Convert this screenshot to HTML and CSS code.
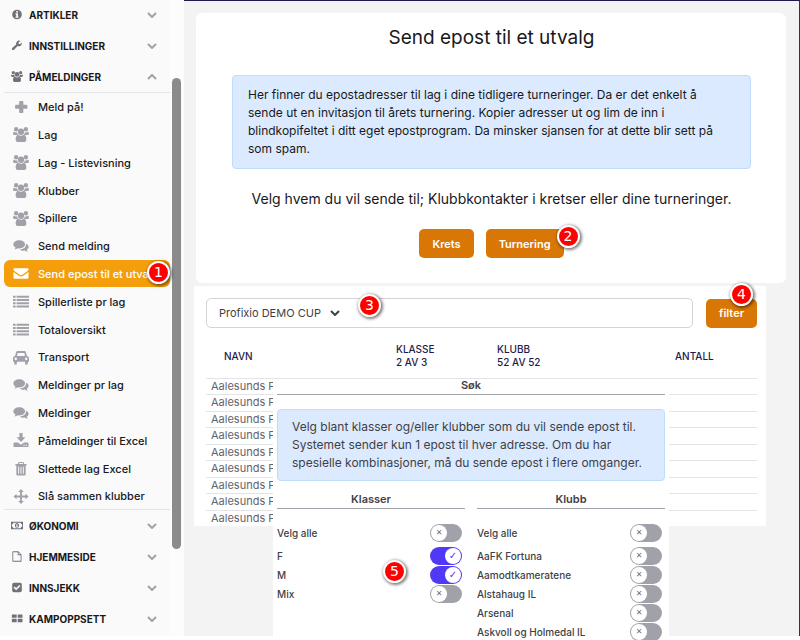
FILE: index.html
```html
<!DOCTYPE html>
<html lang="no">

	<head>
		<meta charset="UTF-8">
		<title>Send epost til et utvalg</title>
		<link rel="stylesheet" href="styles.css">
	</head>

	<body>
		<svg class="sprite" aria-hidden="true">
			<symbol id="info" viewBox="0 0 16 16"><path fill-rule="evenodd" d="M8 1a7 7 0 1 1 0 14A7 7 0 0 1 8 1zM6.800 3v2.200h2.600V3zM5.800 6.300v1.600h1v3.300h-1v1.700h4.600v-1.700h-1V6.300z"/></symbol>
			<symbol id="wrench" viewBox="0 0 16 16"><path d="M15 4.200a4.300 4.300 0 0 1-6 4.600l-5.400 5.500a1.800 1.800 0 0 1-2.500-2.600l5.700-5.300A4.400 4.400 0 0 1 12.400 1l.6.300-2.600 2v2l1.700 1L14.700 4z"/></symbol>
			<symbol id="users" viewBox="0 0 18 16" preserveAspectRatio="none"><circle cx="3.500" cy="2.500" r="2.400"/><circle cx="14.500" cy="2.500" r="2.400"/><circle cx="9" cy="5" r="3.500"/><path d="M1.500 5.300c1 .6 2.200.7 3.300.2 0 1.200.5 2.400 1.100 3.100H2C.6 8.600 0 8 .1 7 .3 5 .9 4.500 1.500 5.300zM16.500 5.300c-1 .6-2.200.7-3.300.2 0 1.200-.5 2.400-1.100 3.100H16c1.400 0 2-.6 1.900-1.600-.2-2-.8-2.500-1.400-1.700zM5.800 8.300c2 1.400 4.400 1.400 6.400 0 1.900.1 2.800 2.200 2.800 4.900 0 1.800-.9 2.700-2.300 2.700H5.300C3.900 15.900 3 15 3 13.200c0-2.700.9-4.800 2.800-4.900z"/></symbol>
			<symbol id="plus" viewBox="0 0 16 16"><path d="M7 2h2.500q1 0 1 1v3.200h3.300q1 0 1 1v2.300q0 1-1 1h-3.300v3.300q0 1-1 1H7q-1 0-1-1v-3.300H2.700q-1 0-1-1V7.200q0-1 1-1H6V3q0-1 1-1z"/></symbol>
			<symbol id="comments" viewBox="0 0 18 16"><path d="M7 2c3.700 0 6.600 2 6.600 4.600s-3 4.700-6.600 4.700c-.6 0-1.200 0-1.700-.2-1 .8-2.300 1.300-3.700 1.400.6-.6 1.100-1.300 1.300-2.200C1.300 9.500.4 8.100.4 6.600.4 4 3.300 2 7 2z"/><path d="M14.700 6c1.800.7 2.900 2 2.900 3.500 0 1.400-.9 2.600-2.200 3.400.2.800.7 1.500 1.200 2-1.400 0-2.600-.5-3.500-1.200-2 .3-4.200-.2-5.500-1.300 4-.1 7.300-2.300 7.100-6.400z"/></symbol>
			<symbol id="mail" viewBox="0 0 18 16"><path d="M2 2h14q1.500 0 1.500 1.300c0 1-.7 1.700-1.500 2.300l-5.500 3.800q-1.500 1-3 0L2 5.600C1.200 5 .5 4.300.5 3.300Q.5 2 2 2z"/><path d="M.5 6.300l6 4.200q2.500 1.500 5 0l6-4.200v6.200q0 1.500-1.500 1.500H2Q.5 14 .5 12.500z"/></symbol>
			<symbol id="list" viewBox="0 0 18 16"><path d="M0 1.500h3v2.200H0zM4 1.500h14v2.200H4zM0 5.200h3v2.200H0zM4 5.200h14v2.200H4zM0 8.900h3v2.200H0zM4 8.900h14v2.200H4zM0 12.600h3v2.200H0zM4 12.600h14v2.200H4z"/></symbol>
			<symbol id="car" viewBox="0 0 20 16" preserveAspectRatio="none"><path fill-rule="evenodd" d="M6 1h8c1.300 0 2 .7 2.400 1.900L17.400 6.500c1.600.2 2.600 1.300 2.600 2.800v3.200h-1.500V14a1.700 1.700 0 0 1-3.400 0v-1.500H4.900V14a1.700 1.700 0 0 1-3.400 0v-1.500H0V9.300c0-1.500 1-2.600 2.600-2.800l1-3.600C4 1.700 4.700 1 6 1zM5 6.500h10l-.8-3.200H5.800zM3.500 7.900a1.500 1.500 0 1 0 0 3 1.500 1.500 0 0 0 0-3zM16.500 7.900a1.500 1.500 0 1 0 0 3 1.500 1.500 0 0 0 0-3z"/></symbol>
			<symbol id="download" viewBox="0 0 16 16"><path d="M6.300 0h3.400v4.500h3L8 9.500l-4.700-5h3z"/><path fill-rule="evenodd" d="M1 10h3.800L8 12.600l3.200-2.600H15q1 0 1 1v3q0 1-1 1H1q-1 0-1-1v-3q0-1 1-1zM10.500 12.500v1H12v-1zM13 12.500v1h1.500v-1z"/></symbol>
			<symbol id="trash" viewBox="0 0 16 16"><path fill-rule="evenodd" d="M5.500 1h5l1 2.200H14v1.500h-1V14q0 1.500-1.500 1.500h-7Q3 15.500 3 14V4.700H2V3.200h2.500zM6.300 2.200l-.5 1h4.400l-.5-1zM5 6v7.500h1V6zM7.500 6v7.500h1V6zM10 6v7.500h1V6z"/></symbol>
			<symbol id="move" viewBox="0 0 16 16"><path d="M8 0l3 3.200H9v3.800h3.800V5L16 8l-3.200 3V9H9v3.800h2L8 16l-3-3.200h2V9H3.200v2L0 8l3.200-3v2H7V3.200H5z"/></symbol>
			<symbol id="money" viewBox="0 0 18 16" preserveAspectRatio="none"><path fill-rule="evenodd" d="M0 2.500h18v11H0zM3.500 4c0 1.300-.9 2.200-2.200 2.200v3.600c1.300 0 2.200.9 2.200 2.200h11c0-1.300.9-2.200 2.200-2.200V6.200c-1.300 0-2.200-.9-2.200-2.200z"/><path fill-rule="evenodd" d="M9 4.500c1.900 0 3 1.500 3 3.500s-1.100 3.500-3 3.500S6 10 6 8s1.100-3.500 3-3.500zM8.500 6l-1 .8v.8h.8v2h-.8v.8h3v-.8h-.8V6z"/></symbol>
			<symbol id="file" viewBox="0 0 16 16"><path fill-rule="evenodd" d="M2 .5h8L14.500 5v10.500H2q-.7 0-.7-.7V1.200Q1.300.5 2 .5zM2.500 1.700v12.600h10.800V6H9V1.700zM10.200 2v2.800H13z"/></symbol>
			<symbol id="check" viewBox="0 0 16 16"><path fill-rule="evenodd" d="M3.500 1h9Q15 1 15 3.500v9q0 2.500-2.500 2.500h-9Q1 15 1 12.500v-9Q1 1 3.500 1zM6.800 12l6.200-6.100-1.600-1.600L6.800 8.900 4.600 6.700 3 8.300z"/></symbol>
			<symbol id="blocks" viewBox="0 0 16 16"><path d="M1 2h6q.5 0 .5.500v4q0 .5-.5.500H1q-.5 0-.5-.5v-4Q.5 2 1 2zM9.500 2h6q.5 0 .5.500v4q0 .5-.5.500h-6Q9 7 9 6.500v-4q0-.5.500-.5zM1 8.500h6q.5 0 .5.500v4q0 .5-.5.500H1q-.5 0-.5-.5V9q0-.5.500-.5zM9.500 8.500h6q.5 0 .5.500v4q0 .5-.5.500h-6Q9 13.500 9 13V9q0-.5.500-.5z"/></symbol>
			<symbol id="down" viewBox="0 0 10 6"><path d="M1 1l4 4 4-4" fill="none" stroke="currentColor" stroke-width="2"/></symbol>
			<symbol id="up" viewBox="0 0 10 6"><path d="M1 5l4-4 4 4" fill="none" stroke="currentColor" stroke-width="2"/></symbol>
		</svg>

		<nav class="sidebar">
			<div class="menu">
				<button class="group" type="button"><svg class="g-icon"><use href="#info"/></svg>Artikler<svg class="arrow"><use href="#down"/></svg></button>
				<button class="group" type="button"><svg class="g-icon"><use href="#wrench"/></svg>Innstillinger<svg class="arrow"><use href="#down"/></svg></button>
				<button class="group" type="button"><svg class="g-icon"><use href="#users"/></svg>Påmeldinger<svg class="arrow"><use href="#up"/></svg></button>
				<ul class="sub">
					<li><a href="#"><svg class="icon"><use href="#plus"/></svg>Meld på!</a></li>
					<li><a href="#"><svg class="icon"><use href="#users"/></svg>Lag</a></li>
					<li><a href="#"><svg class="icon"><use href="#users"/></svg>Lag - Listevisning</a></li>
					<li><a href="#"><svg class="icon"><use href="#users"/></svg>Klubber</a></li>
					<li><a href="#"><svg class="icon"><use href="#users"/></svg>Spillere</a></li>
					<li><a href="#"><svg class="icon"><use href="#comments"/></svg>Send melding</a></li>
					<li><a class="active" href="#"><svg class="icon"><use href="#mail"/></svg><span class="label">Send epost til et utvalg</span><span class="badge badge-menu">1</span></a></li>
					<li><a href="#"><svg class="icon"><use href="#list"/></svg>Spillerliste pr lag</a></li>
					<li><a href="#"><svg class="icon"><use href="#list"/></svg>Totaloversikt</a></li>
					<li><a href="#"><svg class="icon"><use href="#car"/></svg>Transport</a></li>
					<li><a href="#"><svg class="icon"><use href="#comments"/></svg>Meldinger pr lag</a></li>
					<li><a href="#"><svg class="icon"><use href="#comments"/></svg>Meldinger</a></li>
					<li><a href="#"><svg class="icon"><use href="#download"/></svg>Påmeldinger til Excel</a></li>
					<li><a href="#"><svg class="icon"><use href="#trash"/></svg>Slettede lag Excel</a></li>
					<li><a href="#"><svg class="icon"><use href="#move"/></svg>Slå sammen klubber</a></li>
				</ul>
				<button class="group" type="button"><svg class="g-icon"><use href="#money"/></svg>Økonomi<svg class="arrow"><use href="#down"/></svg></button>
				<button class="group" type="button"><svg class="g-icon"><use href="#file"/></svg>Hjemmeside<svg class="arrow"><use href="#down"/></svg></button>
				<button class="group" type="button"><svg class="g-icon"><use href="#check"/></svg>Innsjekk<svg class="arrow"><use href="#down"/></svg></button>
				<button class="group" type="button"><svg class="g-icon"><use href="#blocks"/></svg>Kampoppsett<svg class="arrow"><use href="#down"/></svg></button>
			</div>
			<div class="track"><div class="thumb"></div></div>
		</nav>

		<main class="main">
			<section class="card">
				<h1>Send epost til et utvalg</h1>
				<p class="info">Her finner du epostadresser til lag i dine tidligere turneringer. Da er det enkelt å sende ut en invitasjon til årets turnering. Kopier adresser ut og lim de inn i blindkopifeltet i ditt eget epostprogram. Da minsker sjansen for at dette blir sett på som spam.</p>
				<p class="lead">Velg hvem du vil sende til; Klubbkontakter i kretser eller dine turneringer.</p>
				<div class="buttons">
					<button class="btn" type="button">Krets</button>
					<button class="btn" type="button">Turnering<span class="badge badge-turnering">2</span></button>
				</div>
			</section>

			<section class="panel">
				<div class="bar">
					<div class="picker">
						<select aria-label="Turnering">
							<option>Profixio DEMO CUP</option>
						</select>
						<svg class="arrow"><use href="#down"/></svg>
						<span class="badge badge-picker">3</span>
					</div>
					<button class="btn" type="button">filter<span class="badge badge-filter">4</span></button>
				</div>
				<table class="teams">
					<thead>
						<tr>
							<th class="c-name">Navn</th>
							<th class="c-class">Klasse<br>2 av 3</th>
							<th class="c-club">Klubb<br>52 av 52</th>
							<th class="c-count">Antall</th>
						</tr>
					</thead>
					<tbody>
						<tr><td colspan="4">Aalesunds F</td></tr>
						<tr><td colspan="4">Aalesunds F</td></tr>
						<tr><td colspan="4">Aalesunds F</td></tr>
						<tr><td colspan="4">Aalesunds F</td></tr>
						<tr><td colspan="4">Aalesunds F</td></tr>
						<tr><td colspan="4">Aalesunds F</td></tr>
						<tr><td colspan="4">Aalesunds F</td></tr>
						<tr><td colspan="4">Aalesunds F</td></tr>
						<tr><td colspan="4">Aalesunds F</td></tr>
					</tbody>
				</table>

				<div class="dialog" role="dialog" aria-labelledby="sok">
					<h2 id="sok">Søk</h2>
					<p class="info">Velg blant klasser og/eller klubber som du vil sende epost til. Systemet sender kun 1 epost til hver adresse. Om du har spesielle kombinasjoner, må du sende epost i flere omganger.</p>
					<div class="columns">
						<div class="column">
							<h2>Klasser</h2>
							<label class="all">Velg alle<input type="checkbox"></label>
							<label>F<input type="checkbox" checked></label>
							<label>M<input type="checkbox" checked></label>
							<label>Mix<input type="checkbox"></label>
						</div>
						<div class="column">
							<h2>Klubb</h2>
							<label class="all">Velg alle<input type="checkbox"></label>
							<label>AaFK Fortuna<input type="checkbox"></label>
							<label>Aamodtkameratene<input type="checkbox"></label>
							<label>Alstahaug IL<input type="checkbox"></label>
							<label>Arsenal<input type="checkbox"></label>
							<label>Askvoll og Holmedal IL<input type="checkbox"></label>
						</div>
					</div>
					<span class="badge badge-dialog">5</span>
				</div>
			</section>
		</main>
	</body>

</html>
```
FILE: styles.css
```css
* {
	box-sizing: border-box;
}

body {
	margin: 0;
	height: 100vh;
	padding-bottom: 4px;
	display: flex;
	overflow: hidden;
	background-color: #fff;
	font-family: Inter, "Liberation Sans", sans-serif;
	color: #18181b;
}

h1, h2, p, ul {
	margin: 0;
	padding: 0;
}

button, select {
	font-family: inherit;
	border: none;
	background: none;
	padding: 0;
}

svg {
	fill: currentColor;
	flex: none;
}

.sprite {
	display: none;
}

/* sidebar */
.sidebar {
	flex: 0 0 184px;
	min-width: 0;
	display: flex;
	background-color: #fcfcfc;
}

.menu {
	flex: 1;
	min-width: 0;
	margin-top: -1px;
	padding-left: 4px;
	background-color: #fafafa;
}

.group {
	display: flex;
	align-items: center;
	width: 100%;
	height: 31px;
	padding: 0 13px 0 7px;
	font-size: 10px;
	font-weight: 700;
	text-transform: uppercase;
	color: #18181b;
}

.g-icon {
	width: 12px;
	height: 11px;
	margin-right: 6px;
	color: #71717a;
}

.arrow {
	width: 10px;
	height: 6px;
}

.group .arrow {
	margin-left: auto;
	color: #a1a1aa;
}

.sub {
	list-style: none;
	display: grid;
	grid-template-columns: minmax(0, 1fr);
	gap: 1px;
	border-top: 1px solid #e4e4e7;
	border-bottom: 1px solid #e4e4e7;
}

.sub a {
	position: relative;
	display: flex;
	align-items: center;
	gap: 9px;
	height: 27px;
	padding-left: 9px;
	border-radius: 6px;
	font-size: 11px;
	font-weight: 500;
	white-space: nowrap;
	text-decoration: none;
	color: #18181b;
}

.sub li:nth-child(5n) a {
	height: 26px;
}

.sub .active {
	padding-right: 22px;
	background-color: #f59e0b;
	color: #fff;
}

.label {
	min-width: 0;
	overflow: hidden;
}

.icon {
	width: 16px;
	height: 15px;
	color: #a1a1aa;
}

.active .icon {
	color: #fff;
}

.track {
	flex: none;
	width: 14px;
	padding: 78px 3px 0 2px;
}

.thumb {
	height: 471px;
	border-radius: 5px;
	background-color: #8b8b8b;
}

/* content */
.main {
	flex: 1;
	min-width: 0;
	padding: 12px 13px 0 10px;
	border-top: 1px solid #1e1b4b;
	border-right: 1px solid #1e3a5f;
	background-color: #f3f3f3;
}

.card {
	margin: 0 0 3px 2px;
	padding: 12px 35px 25px 36px;
	border-radius: 6px;
	background-color: #fff;
}

h1 {
	font-size: 19px;
	line-height: 26px;
	font-weight: 400;
	text-align: center;
}

.info {
	padding: 10px 28px 10px 15px;
	border: 1px solid #bfdbfe;
	border-radius: 4px;
	background-color: #dbeafe;
	font-size: 12px;
	line-height: 18px;
}

.card .info {
	margin: 24px 0 20px;
}

.lead {
	font-size: 14px;
	line-height: 20px;
	text-align: center;
}

.buttons {
	display: flex;
	justify-content: center;
	gap: 12px;
	margin-top: 20px;
}

.btn {
	position: relative;
	height: 29px;
	padding: 0 13px;
	border-radius: 5px;
	background-color: #d97706;
	color: #fff;
	font-size: 11px;
	font-weight: 600;
}

.panel {
	position: relative;
	margin-right: 20px;
	padding: 12px 9px 0 12px;
	background-color: #fff;
}

.bar {
	display: flex;
	align-items: center;
	gap: 13px;
}

.picker {
	position: relative;
	flex: 1;
	display: flex;
	align-items: center;
	gap: 9px;
	height: 30px;
	padding-left: 12px;
	border: 1px solid #d4d4d8;
	border-radius: 5px;
}

.picker select {
	appearance: none;
	font-size: 11px;
	color: #3f3f46;
}

.picker .arrow {
	color: #3f3f46;
}

.teams {
	width: 100%;
	margin-top: 9px;
	border-collapse: collapse;
	table-layout: fixed;
}

.teams th {
	height: 41px;
	padding: 0 0 2px;
	text-align: left;
	font-size: 10px;
	line-height: 13px;
	font-weight: 500;
	text-transform: uppercase;
	color: #1e1b4b;
}

.teams .c-name {
	width: 190px;
	padding-left: 18px;
}

.c-class {
	width: 101px;
}

.c-club {
	width: 178px;
}

.teams td {
	height: 16px;
	padding: 0 5px;
	border-top: 1px solid #e4e4e7;
	font-size: 11px;
	line-height: 15px;
	color: #63636b;
}

.teams tr:nth-child(even) td {
	height: 17px;
}

/* filter dialog over the table */
.dialog {
	position: absolute;
	top: 93px;
	left: 79px;
	right: 97px;
	padding: 0 4px;
	background-color: #fff;
}

.dialog h2 {
	height: 16px;
	border-bottom: 1px solid #a1a1aa;
	font-size: 11px;
	line-height: 13px;
	font-weight: 600;
	text-align: center;
	color: #3f3f46;
}

.dialog .info {
	margin: 14px 0 12px;
	padding: 8px 14px;
	color: #3f3f46;
}

.columns {
	display: grid;
	grid-template-columns: 1fr 1fr;
	gap: 12px;
}

.column label {
	display: flex;
	align-items: center;
	justify-content: space-between;
	height: 19px;
	padding-right: 3px;
	font-size: 10px;
	font-weight: 500;
	color: #3f3f46;
}

.column .all {
	margin: 14px 0 4px;
}

.column input {
	appearance: none;
	display: flex;
	width: 32px;
	height: 18px;
	margin: 0;
	padding: 1px;
	border-radius: 9px;
	background-color: #a1a1aa;
}

.column input::before {
	content: "✕";
	width: 16px;
	height: 16px;
	border-radius: 50%;
	background-color: #fff;
	font: bold 8px/16px "DejaVu Sans", sans-serif;
	text-align: center;
	color: #71717a;
}

.column input:checked {
	justify-content: flex-end;
	background-color: #4f39f6;
}

.column input:checked::before {
	content: "✓";
	font-size: 10px;
	color: #4f39f6;
}

/* numbered markers */
.badge {
	position: absolute;
	width: 23px;
	height: 23px;
	border: 2px solid #fff;
	border-radius: 50%;
	background-color: #f00;
	box-shadow: 1px 1px 3px 1px rgba(0, 0, 0, 0.5);
	font: 14px/19px "DejaVu Sans", sans-serif;
	text-align: center;
	color: #fff;
}

.badge-menu {
	top: 1px;
	right: 0;
}

.badge-turnering {
	top: -4px;
	right: -16px;
}

.badge-picker {
	top: -5px;
	left: 151px;
}

.badge-filter {
	top: -16px;
	right: 4px;
}

.badge-dialog {
	top: 181px;
	left: 110px;
}
```
